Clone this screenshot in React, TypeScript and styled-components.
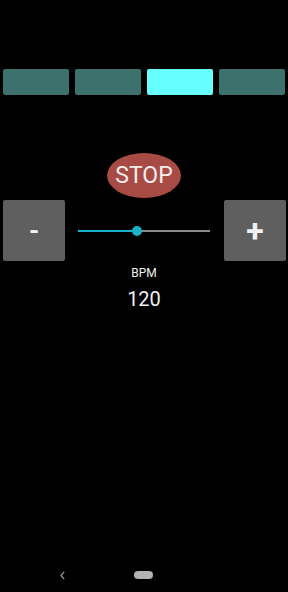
import { useState } from "react";
import styled, { createGlobalStyle } from "styled-components";

const GlobalStyle = createGlobalStyle`
  html, body {
    margin: 0;
    padding: 0;
    background: #000;
  }
  body {
    font-family: Roboto, "Liberation Sans", sans-serif;
  }
`;

const Screen = styled.div`
  width: 288px;
  height: 592px;
  background: #000;
  display: flex;
  flex-direction: column;
  overflow: hidden;
`;

const Beats = styled.div`
  display: flex;
  gap: 6px;
  padding: 69px 3px 0;
`;

const Beat = styled.div<{ $active: boolean }>`
  flex: 1;
  height: 26px;
  border-radius: 2px;
  background: ${(p) => (p.$active ? "#66ffff" : "#3c716e")};
`;

const StopRow = styled.div`
  display: flex;
  justify-content: center;
  padding-top: 58px;
`;

const StopButton = styled.button`
  width: 74px;
  height: 45px;
  border: none;
  border-radius: 50%;
  background: #a84b45;
  color: #fbeeee;
  font-family: Roboto, "Liberation Sans", sans-serif;
  font-size: 23px;
  padding: 0;
`;

const Controls = styled.div`
  display: flex;
  align-items: center;
  padding: 2px 2px 0 3px;
`;

const StepButton = styled.button<{ $big?: boolean }>`
  width: 62px;
  height: 61px;
  border: none;
  border-radius: 2px;
  background: #5f5f5f;
  color: #f2f2f2;
  font-family: Roboto, "Liberation Sans", sans-serif;
  font-weight: bold;
  font-size: ${(p) => (p.$big ? "32px" : "26px")};
  padding: 0;
  display: flex;
  align-items: center;
  justify-content: center;
`;

const SliderWrap = styled.div`
  flex: 1;
  display: flex;
  justify-content: center;
  padding-right: 2px;
`;

const Track = styled.div`
  position: relative;
  width: 132px;
  height: 2px;
  background: #8a8a8a;
`;

const Fill = styled.div`
  height: 2px;
  background: #18b1c6;
`;

const Thumb = styled.div`
  position: absolute;
  top: -4px;
  width: 10px;
  height: 10px;
  margin-left: -5px;
  border-radius: 50%;
  background: #18b1c6;
`;

const Readout = styled.div`
  display: flex;
  flex-direction: column;
  align-items: center;
  padding-top: 4px;
  color: #f0f0f0;
`;

const Label = styled.div`
  font-size: 12px;
  line-height: 16px;
`;

const Value = styled.div`
  font-size: 20px;
  line-height: 24px;
  margin-top: 6px;
`;

const Spacer = styled.div`
  flex: 1;
`;

const NavBar = styled.div`
  height: 32px;
  display: flex;
  align-items: center;
  padding-bottom: 2px;
  box-sizing: border-box;
`;

const Back = styled.div`
  width: 74px;
  display: flex;
  justify-content: flex-end;
  padding-right: 9px;
  box-sizing: border-box;
`;

const Home = styled.div`
  margin-left: 60px;
  width: 19px;
  height: 8px;
  border-radius: 4px;
  background: #b4b4b4;
`;

export default function App() {
  const [bpm] = useState(120);
  const pct = 45;
  return (
    <Screen>
      <GlobalStyle />
      <Beats>
        {[0, 1, 2, 3].map((i) => (
          <Beat key={i} $active={i === 2} />
        ))}
      </Beats>
      <StopRow>
        <StopButton>STOP</StopButton>
      </StopRow>
      <Controls>
        <StepButton>-</StepButton>
        <SliderWrap>
          <Track>
            <Fill style={{ width: `${pct}%` }} />
            <Thumb style={{ left: `${pct}%` }} />
          </Track>
        </SliderWrap>
        <StepButton $big>+</StepButton>
      </Controls>
      <Readout>
        <Label>BPM</Label>
        <Value>{bpm}</Value>
      </Readout>
      <Spacer />
      <NavBar>
        <Back>
          <svg width="5" height="9" viewBox="0 0 5 9">
            <path d="M4.2 0.8 L1 4.5 L4.2 8.2" fill="none" stroke="#9a9a9a" strokeWidth="1.2" />
          </svg>
        </Back>
        <Home />
      </NavBar>
    </Screen>
  );
}
